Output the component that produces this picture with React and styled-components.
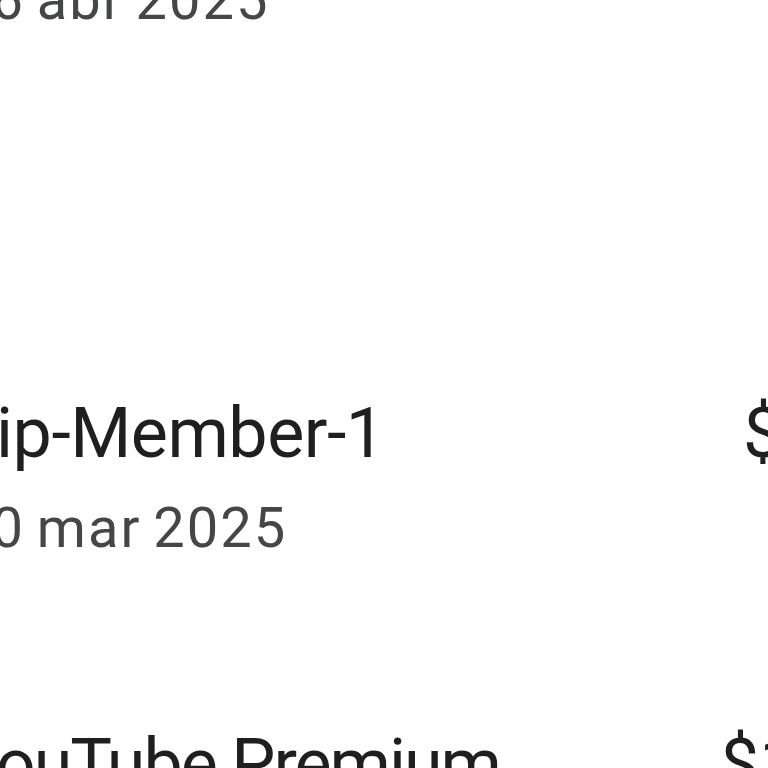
import React from "react";
import styled, { createGlobalStyle } from "styled-components";

const Global = createGlobalStyle`
  html, body { margin: 0; padding: 0; background: #ffffff; }
  body { overflow: hidden; font-family: Roboto, "Noto Sans", Arial, sans-serif; }
`;

const Viewport = styled.div`
  width: 768px;
  height: 768px;
  overflow: hidden;
  background: #ffffff;
`;

const List = styled.div`
  display: flex;
  flex-direction: column;
  margin-top: -137px;
  margin-left: -42px;
  width: 900px;
`;

const Row = styled.div`
  display: flex;
  justify-content: space-between;
  align-items: flex-start;
  padding-bottom: ${(p) => p.$after}px;
`;

const Info = styled.div`
  display: flex;
  flex-direction: column;
  gap: 17px;
`;

const Title = styled.div`
  font-size: 70px;
  line-height: 84px;
  letter-spacing: ${(p) => p.$tight}px;
  color: #1f1f1f;
  white-space: nowrap;
`;

const DateText = styled.div`
  font-size: 56px;
  line-height: 72px;
  letter-spacing: 2px;
  word-spacing: -4px;
  color: #444746;
  white-space: nowrap;
`;

const Price = styled.div`
  font-size: 70px;
  line-height: 84px;
  color: #1f1f1f;
  white-space: nowrap;
  width: ${(p) => p.$w}px;
  text-align: left;
  flex: none;
`;

const SectionGap = styled.div`
  height: 197px;
`;

export default function App() {
  return (
    <Viewport>
      <Global />
      <List>
        <Row $after={158}>
          <Info>
            <Title $tight={-2}>YouTube Premium</Title>
            <DateText>16 abr 2025</DateText>
          </Info>
          <Price $w={138}>$13.99</Price>
        </Row>
        <SectionGap />
        <Row $after={158}>
          <Info>
            <Title $tight={-0.5}>hip-Member-1</Title>
            <DateText>10 mar 2025</DateText>
          </Info>
          <Price $w={115}>$4.99</Price>
        </Row>
        <Row $after={0}>
          <Info>
            <Title $tight={-2}>YouTube Premium</Title>
            <DateText>16 mar 2025</DateText>
          </Info>
          <Price $w={138}>$13.99</Price>
        </Row>
      </List>
    </Viewport>
  );
}
